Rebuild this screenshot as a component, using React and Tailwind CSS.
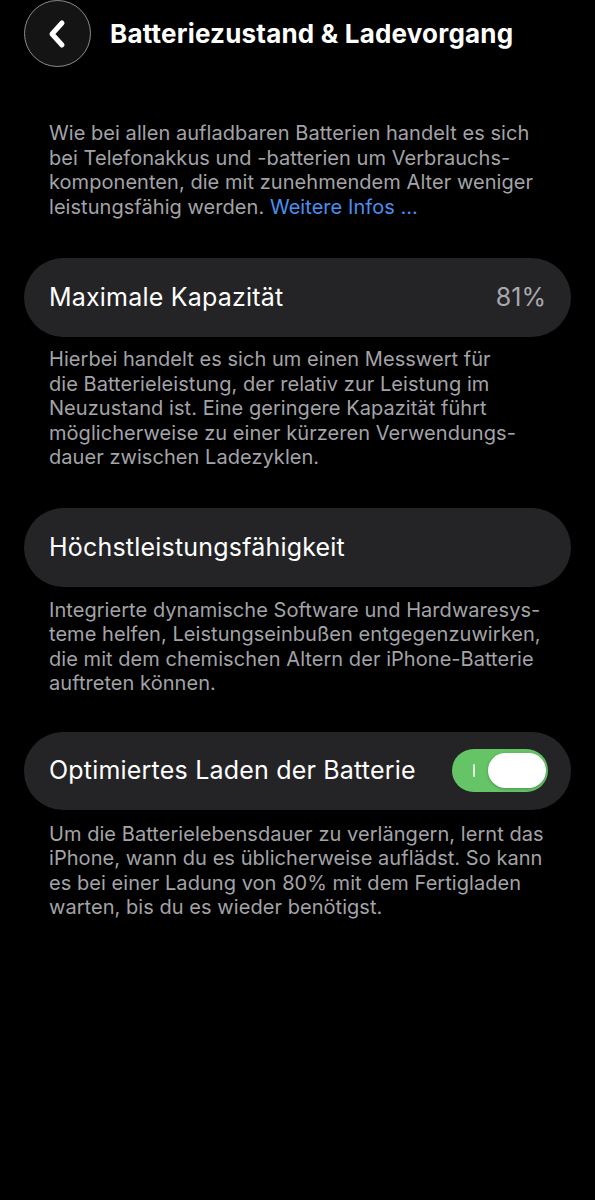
import React from 'react';

const Row = ({ label, children }) => (
  <div className="mx-6 flex h-[79px] items-center justify-between rounded-full bg-[#242426] pl-[25px] pr-[25px]">
    <span className="text-[25px] leading-none tracking-[0.2px] text-white">{label}</span>
    {children}
  </div>
);

const Note = ({ children, className = '' }) => (
  <p className={`whitespace-nowrap px-[49px] text-[20px] leading-[24.5px] tracking-[0.05px] text-[#a3a3a8] ${className}`}>
    {children}
  </p>
);

export default function App() {
  return (
    <div className="min-h-[1200px] w-full bg-black font-['Inter',sans-serif]">
      {/* Header */}
      <div className="flex h-[67px] items-center">
        <button className="ml-6 flex h-[67px] w-[67px] items-center justify-center rounded-full border border-[#8a8a8a] bg-[#141414]">
          <svg width="26" height="30" viewBox="0 0 26 30" fill="none">
            <path d="M17 4 L7 15 L17 26" stroke="white" strokeWidth="5" strokeLinecap="round" strokeLinejoin="round" />
          </svg>
        </button>
        <h1 className="ml-[19px] text-[26px] font-bold tracking-[0.2px] text-white">Batteriezustand &amp; Ladevorgang</h1>
      </div>

      <Note className="mt-[54px]">
        Wie bei allen aufladbaren Batterien handelt es sich
        <br />
        bei Telefonakkus und -batterien um Verbrauchs-
        <br />
        komponenten, die mit zunehmendem Alter weniger
        <br />
        leistungsfähig werden. <span className="text-[#4b8ff0]">Weitere Infos ...</span>
      </Note>

      <div className="mt-[39px]">
        <Row label="Maximale Kapazität">
          <span className="text-[25px] leading-none text-[#a8a8ad]">81%</span>
        </Row>
      </div>
      <Note className="mt-[10px]">
        Hierbei handelt es sich um einen Messwert für
        <br />
        die Batterieleistung, der relativ zur Leistung im
        <br />
        Neuzustand ist. Eine geringere Kapazität führt
        <br />
        möglicherweise zu einer kürzeren Verwendungs-
        <br />
        dauer zwischen Ladezyklen.
      </Note>

      <div className="mt-[38px]">
        <Row label="Höchstleistungsfähigkeit" />
      </div>
      <Note className="mt-[11px]">
        Integrierte dynamische Software und Hardwaresys-
        <br />
        teme helfen, Leistungseinbußen entgegenzuwirken,
        <br />
        die mit dem chemischen Altern der iPhone-Batterie
        <br />
        auftreten können.
      </Note>

      <div className="mt-[36px]">
        <div className="mx-6 flex h-[78px] items-center justify-between rounded-full bg-[#242426] pl-[25px] pr-[23px]">
          <span className="text-[25px] leading-none tracking-[0.2px] text-white">Optimiertes Laden der Batterie</span>
          <div className="flex h-[43px] w-[96px] items-center rounded-full bg-[#65c466] pl-[21px] pr-[2px]">
            <span className="h-[13px] w-[1.5px] rounded bg-white/80" />
            <span className="ml-auto h-[35px] w-[58px] rounded-full bg-white shadow-[0_1px_3px_rgba(0,0,0,0.25)]" />
          </div>
        </div>
      </div>
      <Note className="mt-[12px]">
        Um die Batterielebensdauer zu verlängern, lernt das
        <br />
        iPhone, wann du es üblicherweise auflädst. So kann
        <br />
        es bei einer Ladung von 80% mit dem Fertigladen
        <br />
        warten, bis du es wieder benötigst.
      </Note>
    </div>
  );
}
